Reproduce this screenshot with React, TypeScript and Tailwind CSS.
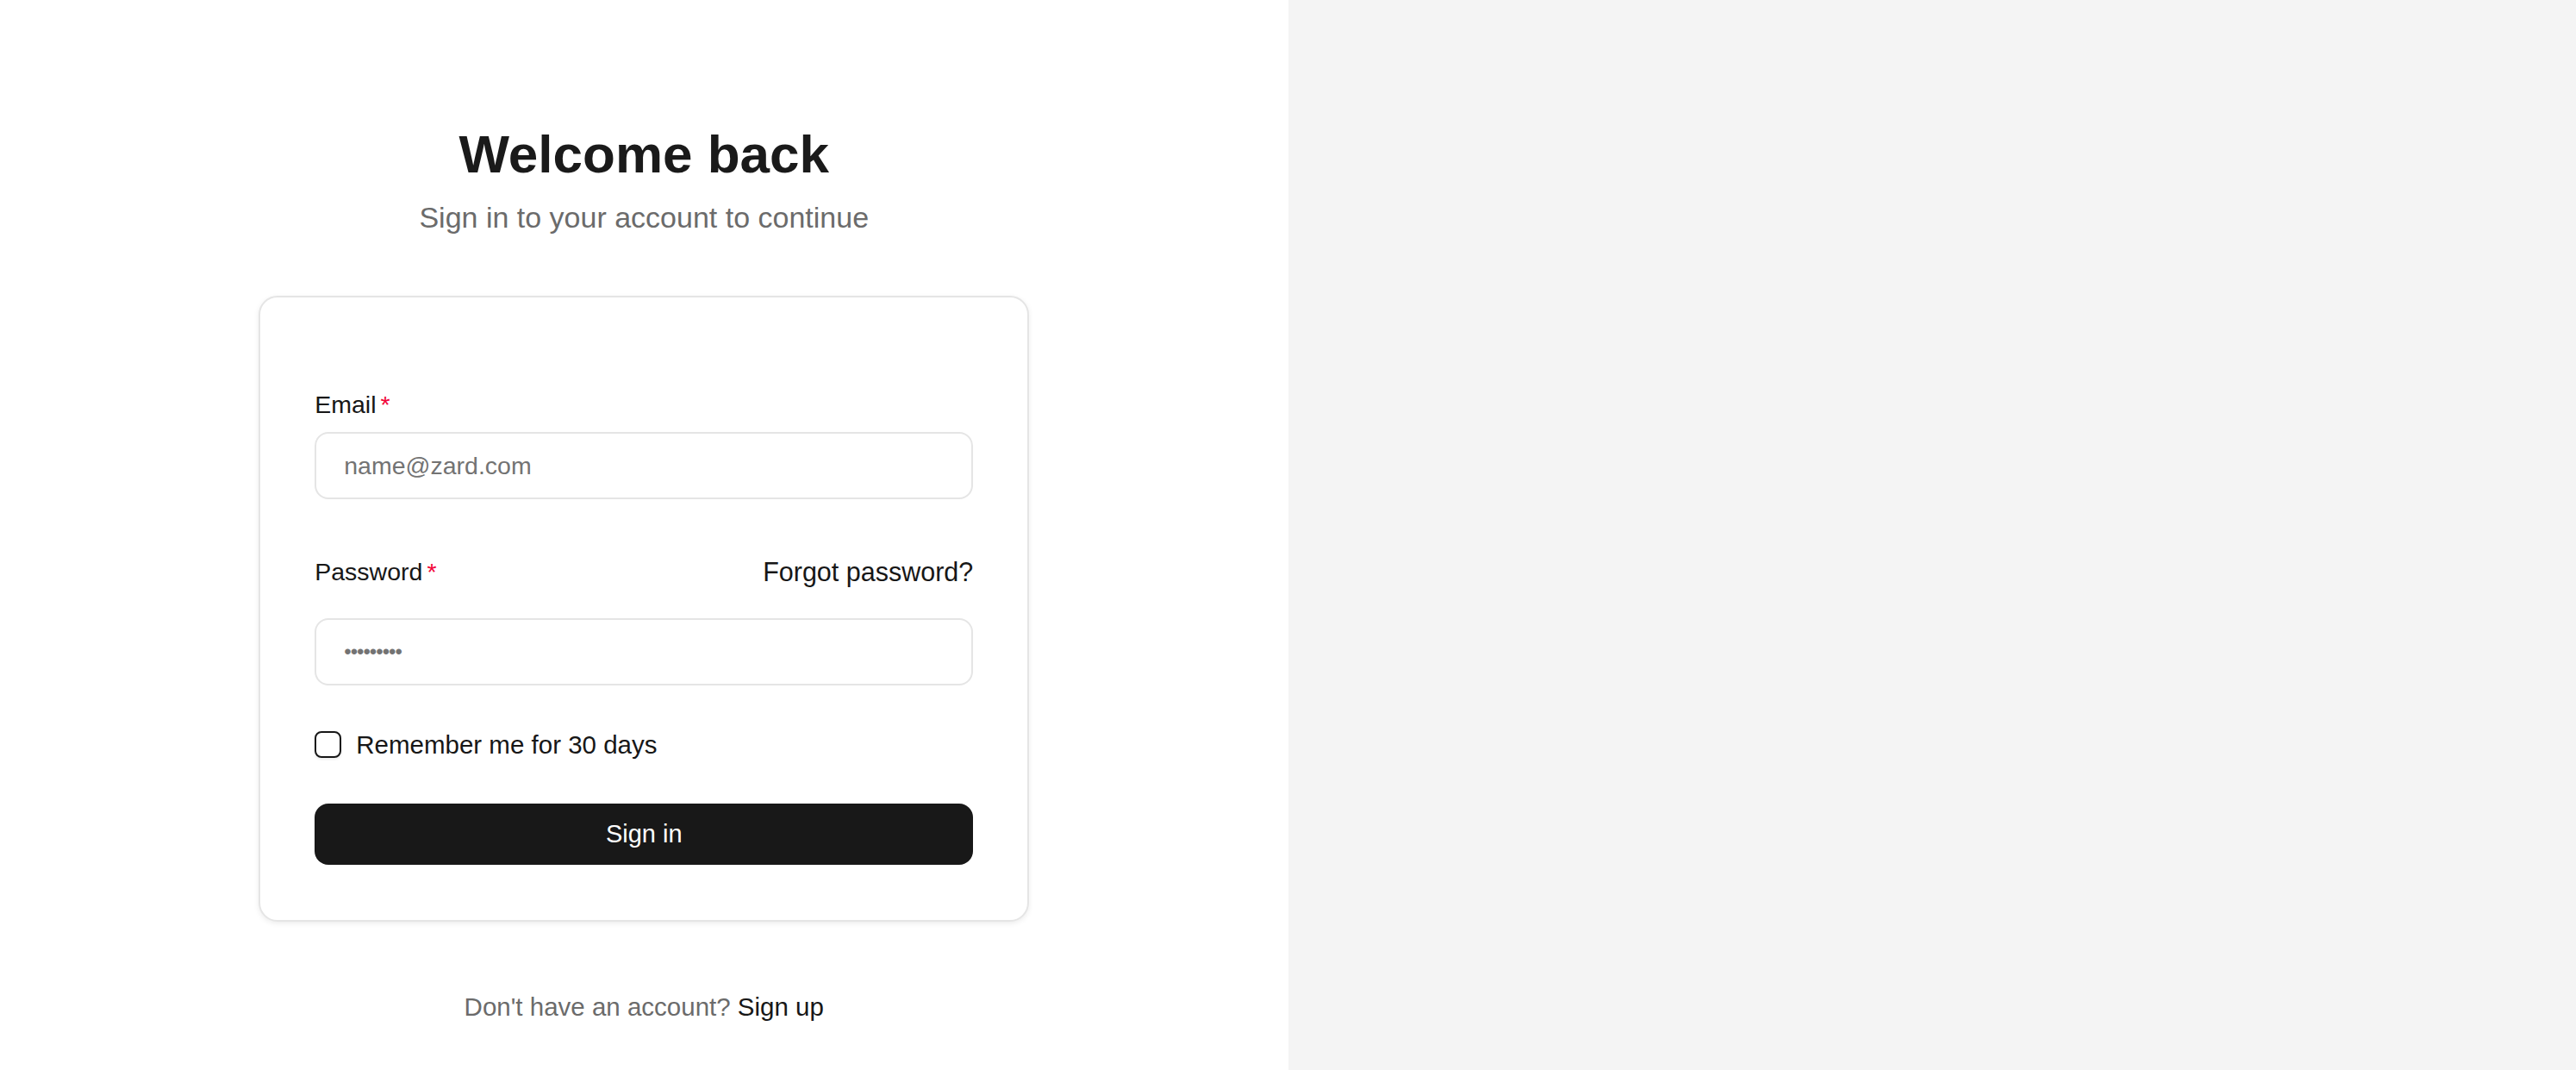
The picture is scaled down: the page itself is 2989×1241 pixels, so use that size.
export default function App() {
  return (
    <div className="grid min-h-screen grid-cols-2 font-['Liberation_Sans',Arial,sans-serif] text-[#171717]">
      {/* Left: sign-in form */}
      <div className="flex flex-col items-center bg-white pt-[143px]">
        <h1 className="text-[62px] font-bold leading-[72px] text-[#1a1a1a]">Welcome back</h1>
        <p className="mt-[13px] text-[34px] leading-[48px] text-[#6b6b6b]">
          Sign in to your account to continue
        </p>

        <form
          className="mt-[67px] flex w-[894px] flex-col rounded-[22px] border-2 border-[#e5e5e5] bg-white px-[63px] pt-[104px] pb-[64px] shadow-[0_2px_6px_rgba(0,0,0,0.08)]"
          onSubmit={(e) => e.preventDefault()}
        >
          <label className="flex h-[40px] items-center text-[28.5px] leading-[40px]">
            Email<span className="ml-[5px] text-[#f2063a]">*</span>
          </label>
          <input
            type="email"
            placeholder="name@zard.com"
            className="mt-[12px] h-[78px] w-full rounded-[16px] border-2 border-[#e5e5e5] bg-white px-[32px] text-[28.5px] outline-none placeholder:text-[#737373]"
          />

          <div className="mt-[64px] flex h-[40px] items-center justify-between text-[28.5px] leading-[40px]">
            <label>
              Password<span className="ml-[5px] text-[#f2063a]">*</span>
            </label>
            <a href="#" className="text-[30.5px] text-[#171717]">
              Forgot password?
            </a>
          </div>
          <input
            type="password"
            placeholder="•••••••••"
            className="mt-[34px] h-[78px] w-full rounded-[16px] border-2 border-[#e5e5e5] bg-white px-[32px] text-[24px] tracking-[-1px] outline-none placeholder:text-[#737373]"
          />

          <label className="mt-[53px] flex h-[31px] items-center gap-[17px] text-[29.5px] leading-[40px]">
            <span className="h-[31px] w-[31px] shrink-0 rounded-[8px] border-2 border-[#171717] bg-white shadow-[0_2px_3px_rgba(0,0,0,0.08)]" />
            Remember me for 30 days
          </label>

          <button
            type="submit"
            className="mt-[53px] h-[71px] w-full rounded-[16px] bg-[#181818] text-[29px] font-medium text-white"
          >
            Sign in
          </button>
        </form>

        <p className="mt-[79px] text-[29.5px] leading-[40px] text-[#6b6b6b]">
          Don't have an account? <a href="#" className="font-medium text-[#171717]">Sign up</a>
        </p>
      </div>

      {/* Right: empty panel */}
      <div className="bg-[#f4f4f4]" />
    </div>
  )
}
